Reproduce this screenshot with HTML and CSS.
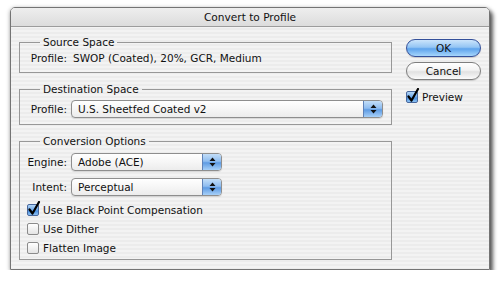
FILE: index.html
```html
<!DOCTYPE html>
<html lang="en">
<head>
    <meta charset="UTF-8">
    <title>Convert to Profile</title>
    <link rel="stylesheet" href="styles.css">
</head>
<body>
<div class="window">
    <div class="titlebar">Convert to Profile</div>

    <div class="content">
        <div class="main">
            <fieldset class="group group-source">
                <legend>Source Space</legend>
                <div class="row">
                    <span class="field-label">Profile:</span>
                    <span class="value">SWOP (Coated), 20%, GCR, Medium</span>
                </div>
            </fieldset>

            <fieldset class="group group-dest">
                <legend>Destination Space</legend>
                <div class="row">
                    <span class="field-label">Profile:</span>
                    <div class="popup popup-wide">
                        <span class="popup-text">U.S. Sheetfed Coated v2</span>
                        <span class="popup-arrows">
                            <svg width="7" height="10" viewBox="0 0 7 10"><path d="M0.5 4 L3.5 0.5 L6.5 4 Z M0.5 6 L3.5 9.5 L6.5 6 Z" fill="#111"/></svg>
                        </span>
                    </div>
                </div>
            </fieldset>

            <fieldset class="group group-options">
                <legend>Conversion Options</legend>
                <div class="row">
                    <span class="field-label">Engine:</span>
                    <div class="popup popup-short">
                        <span class="popup-text">Adobe (ACE)</span>
                        <span class="popup-arrows">
                            <svg width="7" height="10" viewBox="0 0 7 10"><path d="M0.5 4 L3.5 0.5 L6.5 4 Z M0.5 6 L3.5 9.5 L6.5 6 Z" fill="#111"/></svg>
                        </span>
                    </div>
                </div>
                <div class="row row-intent">
                    <span class="field-label">Intent:</span>
                    <div class="popup popup-short">
                        <span class="popup-text">Perceptual</span>
                        <span class="popup-arrows">
                            <svg width="7" height="10" viewBox="0 0 7 10"><path d="M0.5 4 L3.5 0.5 L6.5 4 Z M0.5 6 L3.5 9.5 L6.5 6 Z" fill="#111"/></svg>
                        </span>
                    </div>
                </div>

                <div class="checks">
                    <label class="check">
                        <span class="box checked">
                            <svg class="tick" width="14" height="15" viewBox="0 0 14 15"><path d="M2.5 8.5 L5.5 12.5 L12 1" fill="none" stroke="#000" stroke-width="2.2" stroke-linecap="round" stroke-linejoin="round"/></svg>
                        </span>
                        Use Black Point Compensation
                    </label>
                    <label class="check">
                        <span class="box"></span>
                        Use Dither
                    </label>
                    <label class="check">
                        <span class="box"></span>
                        Flatten Image
                    </label>
                </div>
            </fieldset>
        </div>

        <div class="side">
            <button class="btn btn-default">OK</button>
            <button class="btn btn-cancel">Cancel</button>
            <label class="check check-preview">
                <span class="box checked">
                    <svg class="tick" width="14" height="15" viewBox="0 0 14 15"><path d="M2.5 8.5 L5.5 12.5 L12 1" fill="none" stroke="#000" stroke-width="2.2" stroke-linecap="round" stroke-linejoin="round"/></svg>
                </span>
                Preview
            </label>
        </div>
    </div>
</div>
</body>
</html>
```

FILE: styles.css
```css
body {
    margin: 0;
    background: #fff;
    font-family: "DejaVu Sans", "Liberation Sans", sans-serif;
    font-size: 10.5px;
    color: #111;
}

.window {
    width: 478px;
    margin: 7px 0 0 10px;
    border: 1px solid #747474;
    border-radius: 5px 5px 0 0;
    background: repeating-linear-gradient(to bottom, #ececec 0, #ececec 2px, #f3f3f3 2px, #f3f3f3 4px);
    box-shadow: 0 1px 4px rgba(0, 0, 0, 0.35), 3px 4px 4px rgba(0, 0, 0, 0.6);
}

.titlebar {
    height: 18px;
    line-height: 18px;
    text-align: center;
    font-size: 10.6px;
    border-bottom: 1px solid #9c9c9c;
    border-radius: 4px 4px 0 0;
    background: linear-gradient(to bottom, #eeeeee, #dcdcdc);
}

.content {
    display: flex;
    gap: 14px;
    padding: 9px 8px;
}

.main {
    width: 373px;
}

.side {
    width: 75px;
    padding-top: 3px;
    display: flex;
    flex-direction: column;
}

/* group boxes */
.group {
    margin: 0;
    padding: 0 7px;
    border: 1px solid #979797;
    min-width: 0;
}

.group legend {
    margin-left: 13px;
    padding: 0 3px;
    line-height: 13px;
}

.group-source {
    padding-top: 3px;
    padding-bottom: 7px;
}

.group-dest {
    margin-top: 10px;
    padding-top: 4px;
    padding-bottom: 6px;
}

.group-options {
    margin-top: 10px;
    padding-top: 5px;
    padding-bottom: 2px;
}

.row {
    display: flex;
    align-items: center;
    line-height: 13px;
}

.row-intent {
    margin-top: 7px;
}

.field-label {
    width: 40px;
    flex: none;
    text-align: right;
    margin-right: 4px;
}

.group-source .value {
    margin-left: 2px;
}

/* popup menus */
.popup {
    display: flex;
    height: 18px;
    box-sizing: border-box;
    border: 1px solid #8e8e8e;
    border-radius: 4px;
    background: linear-gradient(to bottom, #ffffff, #f6f6f6 50%, #ececec);
    box-shadow: 0 1px 1px rgba(0, 0, 0, 0.12);
}

.popup-wide {
    width: 312px;
}

.popup-short {
    width: 151px;
}

.popup-text {
    flex: 1;
    padding-left: 6px;
    line-height: 16px;
}

.popup-arrows {
    width: 18px;
    display: flex;
    align-items: center;
    justify-content: center;
    border-left: 1px solid #5f82b8;
    border-radius: 0 3px 3px 0;
    background: linear-gradient(to bottom, #c3def8, #8fbdf0 45%, #5e9be3 55%, #a7d0f8);
}

/* checkboxes */
.checks {
    margin-top: 4px;
}

.check {
    display: flex;
    align-items: center;
    height: 19px;
}

.box {
    position: relative;
    width: 12px;
    height: 12px;
    box-sizing: border-box;
    flex: none;
    margin-right: 4px;
    border: 1px solid #8b8b8b;
    border-radius: 2px;
    background: linear-gradient(to bottom, #ffffff, #e4e4e4);
}

.box.checked {
    border-color: #48679c;
    background: linear-gradient(to bottom, #b3d6f7, #6ea9ea 50%, #4b90e0 60%, #8cc2f3);
}

.tick {
    position: absolute;
    left: -1px;
    top: -4px;
}

/* buttons */
.btn {
    width: 100%;
    height: 18px;
    padding: 0;
    font: inherit;
    color: #111;
    border: 1px solid #7e7e7e;
    border-radius: 9px;
    background: linear-gradient(to bottom, #ffffff, #f3f3f3 45%, #e1e1e1 55%, #fbfbfb);
    box-shadow: 0 1px 1px rgba(0, 0, 0, 0.15);
}

.btn-default {
    border-color: #34509a;
    background: linear-gradient(to bottom, #cbe4fb, #94c5f4 45%, #5ea3ec 55%, #a6d6fc);
}

.btn-cancel {
    margin-top: 5px;
}

.check-preview {
    margin-top: 9px;
    height: 16px;
}
```
